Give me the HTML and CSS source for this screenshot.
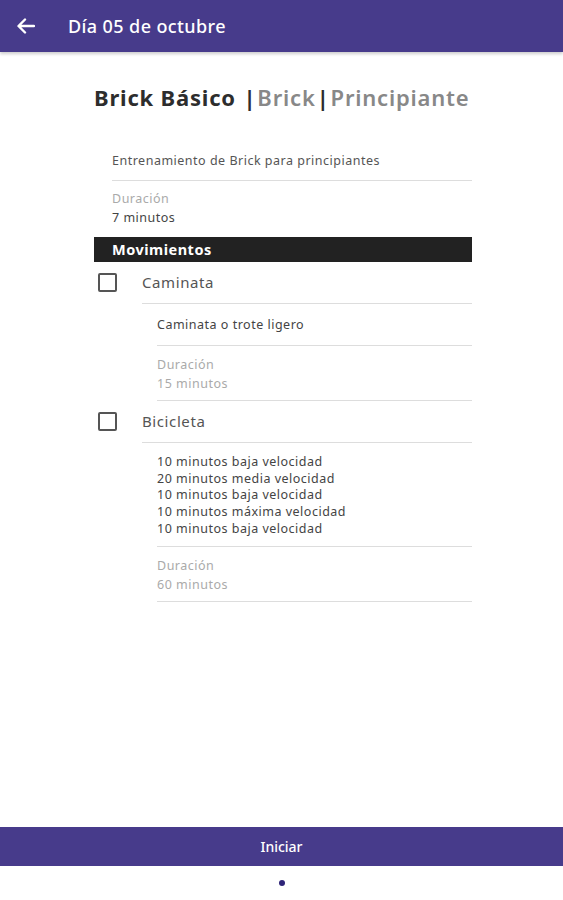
FILE: index.html
```html
<!DOCTYPE html>
<html lang="es">
<head>
  <meta charset="UTF-8">
  <meta name="viewport" content="width=device-width, initial-scale=1.0">
  <title>Día 05 de octubre</title>
  <link rel="stylesheet" href="styles.css">
</head>
<body>
  <header class="appbar">
    <svg class="back" width="18" height="16" viewBox="0 0 18 16">
      <path d="M17 8H2M8 1.5L1.5 8 8 14.5" fill="none" stroke="#fff" stroke-width="2.4" stroke-linecap="round" stroke-linejoin="round"/>
    </svg>
    <h1>Día 05 de octubre</h1>
  </header>

  <main class="content">
    <h2 class="title"><span class="name">Brick Básico</span> <span class="sep">|</span>Brick<span class="sep">|</span>Principiante</h2>

    <div class="info">
      <p class="desc">Entrenamiento de Brick para principiantes</p>
      <div class="field">
        <span class="label">Duración</span>
        <span class="value">7 minutos</span>
      </div>
    </div>

    <div class="section">Movimientos</div>

    <div class="move">
      <div class="move-head">
        <span class="check"></span>
        <span class="move-name">Caminata</span>
      </div>
      <div class="move-body">
        <p class="move-desc single">Caminata o trote ligero</p>
        <div class="field muted">
          <span class="label">Duración</span>
          <span class="value">15 minutos</span>
        </div>
      </div>
    </div>

    <div class="move">
      <div class="move-head">
        <span class="check"></span>
        <span class="move-name">Bicicleta</span>
      </div>
      <div class="move-body">
        <p class="move-desc">10 minutos baja velocidad<br>20 minutos media velocidad<br>10 minutos baja velocidad<br>10 minutos máxima velocidad<br>10 minutos baja velocidad</p>
        <div class="field muted">
          <span class="label">Duración</span>
          <span class="value">60 minutos</span>
        </div>
      </div>
    </div>
  </main>

  <footer class="bottom">
    <button class="start">Iniciar</button>
    <div class="dots"><span></span></div>
  </footer>
</body>
</html>
```

FILE: styles.css
```css
body {
  margin: 0;
  font-family: "Noto Sans", "Open Sans", sans-serif;
  background: #fff;
  color: #444;
  width: 563px;
  height: 900px;
  position: relative;
}

.appbar {
  height: 52px;
  background: #473b8b;
  display: flex;
  align-items: center;
  padding-left: 17px;
  box-shadow: 0 2px 3px rgba(0,0,0,0.2);
}

.appbar .back {
  margin-right: 33px;
}

.appbar h1 {
  margin: 0;
  color: #fff;
  font-size: 18px;
  font-weight: 500;
  letter-spacing: 0.4px;
}

.content {
  width: 378px;
  margin: 0 auto;
  padding-left: 3px;
}

.title {
  margin: 30px 0 40px;
  font-size: 22px;
  font-weight: 600;
  color: #888;
  white-space: nowrap;
  line-height: 30px;
  letter-spacing: 0.8px;
}

.title .name {
  color: #2d2d2d;
  font-weight: 700;
}

.title .sep {
  color: #2d2d2d;
  font-weight: 700;
  margin: 0 1px;
}

.info {
  padding-left: 18px;
}

.desc {
  margin: 0;
  font-size: 12.5px;
  letter-spacing: 0.5px;
  color: #555;
  padding-bottom: 11px;
  border-bottom: 1px solid #ddd;
}

.field {
  display: flex;
  flex-direction: column;
  padding-top: 9px;
  font-size: 12.5px;
  letter-spacing: 0.5px;
  line-height: 18.5px;
}

.field .label {
  color: #aaa;
}

.field .value {
  color: #444;
}

.section {
  margin-top: 10px;
  background: #222;
  color: #fff;
  font-weight: 700;
  font-size: 14.5px;
  letter-spacing: 0.5px;
  height: 25px;
  line-height: 25px;
  padding-left: 18px;
}

.move-head {
  display: flex;
  align-items: center;
  height: 41px;
}

.check {
  width: 15px;
  height: 15px;
  border: 2px solid #555;
  border-radius: 2px;
  margin: 0 25px 0 4px;
}

.move-name {
  flex: 1;
  font-size: 15px;
  letter-spacing: 0.6px;
  color: #555;
  height: 41px;
  line-height: 41px;
  border-bottom: 1px solid #ddd;
  margin-top: 1px;
}

.move-body {
  margin-left: 63px;
}

.move-desc {
  margin: 0;
  padding: 12px 0 8px;
  font-size: 12.5px;
  letter-spacing: 0.5px;
  line-height: 16.8px;
  color: #444;
  border-bottom: 1px solid #ddd;
}

.move-desc.single {
  padding: 14px 0 11px;
}

.field.muted {
  line-height: 19px;
  padding-bottom: 7px;
  border-bottom: 1px solid #ddd;
}

.field.muted .value {
  color: #aaa;
}

.bottom {
  position: absolute;
  left: 0;
  right: 0;
  top: 827px;
}

.start {
  display: block;
  width: 100%;
  height: 39px;
  border: 0;
  background: #473b8b;
  color: #fff;
  font-family: inherit;
  font-size: 14px;
  font-weight: 500;
}

.dots {
  display: flex;
  justify-content: center;
  padding-top: 14px;
}

.dots span {
  width: 6px;
  height: 6px;
  border-radius: 50%;
  background: #2e2478;
}
```
